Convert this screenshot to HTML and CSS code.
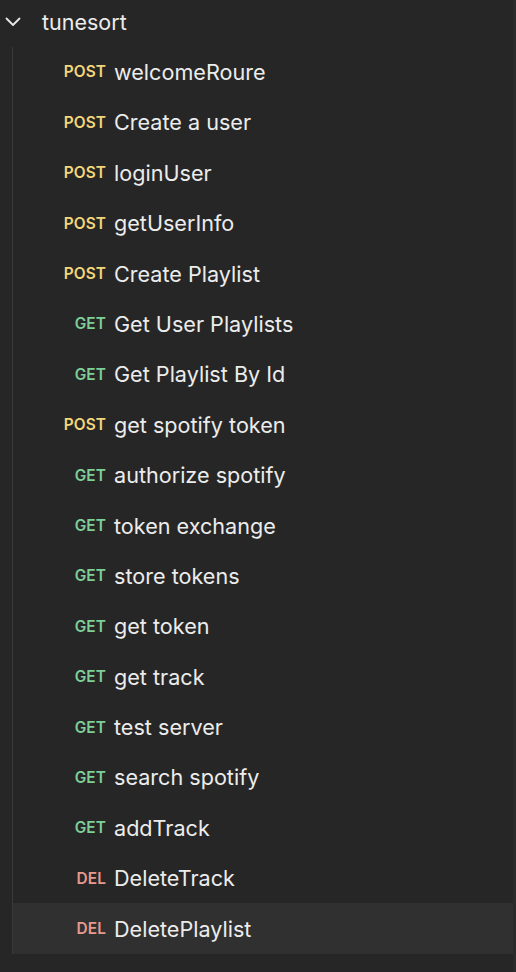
FILE: index.html
```html
<!DOCTYPE html>
<html>
<head>
<meta charset="utf-8">
<link rel="stylesheet" href="styles.css">
</head>
<body>
<div class="panel">
  <div class="folder">
    <svg class="chev" width="16" height="10" viewBox="0 0 16 10"><path d="M1.5 1.5 L8 8 L14.5 1.5" fill="none" stroke="#e8e8e8" stroke-width="1.8" stroke-linecap="round" stroke-linejoin="round"/></svg>
    <span class="folder-name">tunesort</span>
  </div>
  <div class="tree">
    <div class="row"><span class="m post">POST</span><span class="n">welcomeRoure</span></div>
    <div class="row"><span class="m post">POST</span><span class="n">Create a user</span></div>
    <div class="row"><span class="m post">POST</span><span class="n">loginUser</span></div>
    <div class="row"><span class="m post">POST</span><span class="n">getUserInfo</span></div>
    <div class="row"><span class="m post">POST</span><span class="n">Create Playlist</span></div>
    <div class="row"><span class="m get">GET</span><span class="n">Get User Playlists</span></div>
    <div class="row"><span class="m get">GET</span><span class="n">Get Playlist By Id</span></div>
    <div class="row"><span class="m post">POST</span><span class="n">get spotify token</span></div>
    <div class="row"><span class="m get">GET</span><span class="n">authorize spotify</span></div>
    <div class="row"><span class="m get">GET</span><span class="n">token exchange</span></div>
    <div class="row"><span class="m get">GET</span><span class="n">store tokens</span></div>
    <div class="row"><span class="m get">GET</span><span class="n">get token</span></div>
    <div class="row"><span class="m get">GET</span><span class="n">get track</span></div>
    <div class="row"><span class="m get">GET</span><span class="n">test server</span></div>
    <div class="row"><span class="m get">GET</span><span class="n">search spotify</span></div>
    <div class="row"><span class="m get">GET</span><span class="n">addTrack</span></div>
    <div class="row"><span class="m del">DEL</span><span class="n">DeleteTrack</span></div>
    <div class="row active"><span class="m del">DEL</span><span class="n">DeletePlaylist</span></div>
  </div>
</div>
</body>
</html>
```
FILE: styles.css
```css
html, body {
  margin: 0;
  padding: 0;
  background: #262626;
  height: 100%;
}
body {
  font-family: Inter, "Noto Sans", sans-serif;
  color: #e6e6e6;
  overflow: hidden;
}
.panel {
  width: 513px;
  height: 972px;
  border-right: 3px solid #2b2b2b;
}
.folder {
  height: 46.8px;
  display: flex;
  align-items: center;
  padding-bottom: 2px;
  box-sizing: border-box;
}
.chev {
  margin-left: 5px;
}
.folder-name {
  margin-left: 21px;
  font-size: 21.5px;
  color: #ececec;
}
.tree {
  margin-left: 12px;
  border-left: 1px solid #3a3a3a;
}
.row {
  height: 50.4px;
  display: flex;
  align-items: center;
}
.row.active {
  background: #303030;
}
.m {
  width: 101px;
  text-align: right;
  font-size: 15.4px;
  font-weight: 600;
  padding-right: 8px;
  box-sizing: border-box;
  letter-spacing: 0.1px;
}
.n {
  font-size: 21.6px;
  color: #ececec;
}
.post { color: #f3d77a; }
.get { color: #7dcf98; }
.del { color: #e8998c; }
```
